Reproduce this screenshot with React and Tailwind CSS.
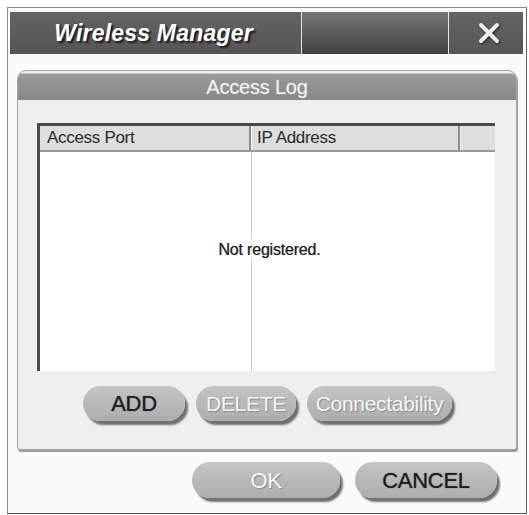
import React from "react";

function PillButton({ label, enabled, className }) {
  return (
    <div
      className={`h-[35px] rounded-full bg-gradient-to-b from-[#c4c4c4] to-[#adadad] shadow-[3px_4px_2px_#707070] flex items-center justify-center tracking-[-0.3px] ${
        enabled
          ? "text-[#1e1e1e] [text-shadow:0_0_1px_#444]"
          : "text-[#f6f6f6] [text-shadow:1px_1px_1px_#8a8a8a]"
      } ${className}`}
    >
      {label}
    </div>
  );
}

export default function App() {
  return (
    <div
      className="w-[529px] h-[515px] bg-white pt-[7px] pl-[7px]"
      style={{ fontFamily: '"Liberation Sans", Arial, sans-serif' }}
    >
      <div className="w-[520px] h-[507px] border border-[#8c8c8c] border-r-[#666] border-b-[#555] bg-[#fbfbfb] pt-[4px] pl-[2px] pr-[3px] flex flex-col">
        {/* title bar */}
        <div className="h-[42px] flex bg-[#e6e6e6] gap-[1px]">
          <div className="w-[291px] bg-gradient-to-b from-[#636363] to-[#555] flex items-center justify-center">
            <span className="text-white text-[23px] font-bold italic tracking-[0.2px] [text-shadow:2px_2px_2px_#1a1a1a] -ml-[4px]">
              Wireless Manager
            </span>
          </div>
          <div className="w-[146px] bg-gradient-to-b from-[#777] via-[#5c5c5c] to-[#3f3f3f]" />
          <div className="flex-1 bg-gradient-to-b from-[#646464] to-[#565656] flex items-center justify-center">
            <svg width="26" height="24" viewBox="0 0 26 24" className="ml-[6px] drop-shadow-[1px_1px_1px_#222]">
              <path d="M5 4 L21 20 M21 4 L5 20" stroke="#ececec" strokeWidth="4" strokeLinecap="round" />
            </svg>
          </div>
        </div>

        {/* access log panel */}
        <div className="mt-[16px] ml-[7px] mr-[6px] h-[380px] rounded-t-[9px] rounded-b-[3px] border border-[#a6a6a6] bg-[#efefef] shadow-[1px_2px_1px_#9a9a9a] flex flex-col overflow-hidden">
          <div className="h-[27px] mt-[2px] bg-gradient-to-b from-[#9a9a9a] to-[#878787] border-t border-[#c8c8c8] flex items-center justify-center">
            <span className="text-[#f2f2f2] text-[20px] tracking-[-0.2px] [text-shadow:0_0_1px_#bbb] -ml-[20px]">Access Log</span>
          </div>

          {/* list */}
          <div className="mt-[23px] ml-[19px] mr-[21px] h-[248px] bg-white border-t-[3px] border-l-[3px] border-[#4a4a4a] flex flex-col">
            <div className="h-[26px] flex bg-[#dedede] border-b-[2px] border-[#9a9a9a]">
              <div className="w-[211px] border-r-[2px] border-[#8a8a8a] flex items-center pl-[7px] text-[17px] tracking-[-0.3px] text-[#2a2a2a]">
                Access Port
              </div>
              <div className="w-[209px] border-r-[2px] border-[#8a8a8a] border-l border-l-[#f4f4f4] flex items-center pl-[5px] text-[17px] tracking-[-0.3px] text-[#2a2a2a]">
                IP Address
              </div>
              <div className="flex-1 border-l border-l-[#f4f4f4]" />
            </div>
            <div className="flex-1 grid">
              <div className="col-start-1 row-start-1 flex">
                <div className="w-[212px] border-r border-[#d0d0d0]" />
                <div className="flex-1" />
              </div>
              <div className="col-start-1 row-start-1 flex justify-center pt-[86px] pl-[4px]">
                <span className="text-[16px] tracking-[-0.2px] text-[#222] h-[21px] bg-white/60 [text-shadow:0_0_1px_#777]">Not registered.</span>
              </div>
            </div>
          </div>

          {/* list actions */}
          <div className="mt-[15px] flex pl-[65px] gap-[11px]">
            <PillButton label="ADD" enabled className="w-[102px] text-[22px]" />
            <PillButton label="DELETE" className="w-[100px] text-[21px]" />
            <PillButton label="Connectability" className="w-[145px] text-[21px]" />
          </div>
        </div>

        {/* dialog actions */}
        <div className="mt-[12px] flex pl-[182px] gap-[15px]">
          <PillButton label="OK" className="w-[148px] h-[36px] text-[22px]" />
          <PillButton label="CANCEL" enabled className="w-[142px] h-[36px] text-[22px]" />
        </div>
      </div>
    </div>
  );
}
